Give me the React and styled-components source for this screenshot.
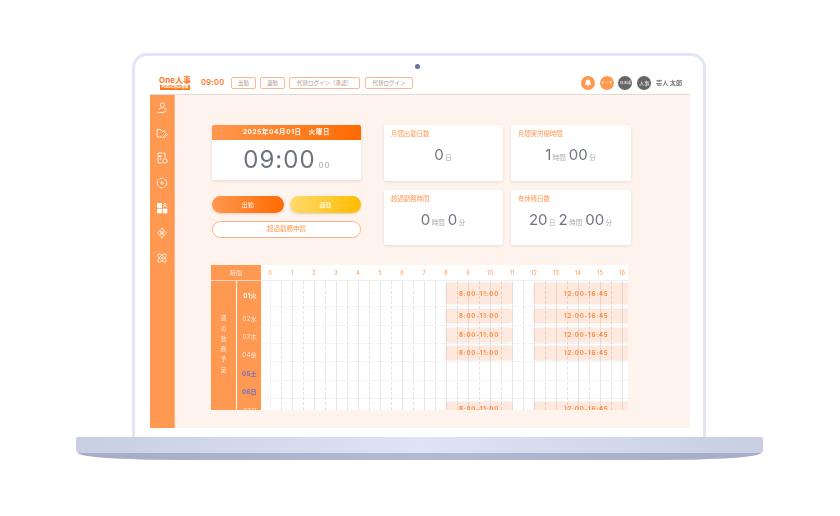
import styled, { createGlobalStyle } from 'styled-components';

const GlobalStyle = createGlobalStyle`
html, body {
  margin: 0;
  padding: 0;
  background: #fff;
  font-family: Inter, "Noto Sans CJK JP", sans-serif;
}
* { box-sizing: border-box; }
`;

const Page = styled.div`
  width: 840px;
  height: 516px;
  padding: 53px 0 0 76px;
  overflow: hidden;
`;
const Laptop = styled.div`
  width: 687px;
`;
const Lid = styled.div`
  position: relative;
  width: 574px;
  height: 384px;
  margin-left: 56px;
  padding: 16px 13px 9px 15px;
  background: #fff;
  border: 3px solid #e1e5f5;
  border-bottom: 0;
  border-radius: 15px 15px 0 0;
`;
const Camera = styled.span`
  position: absolute;
  top: 8px;
  left: 280px;
  width: 5px;
  height: 5px;
  border-radius: 50%;
  background: #68739f;
`;
const Base = styled.div`
  height: 16px;
  background: linear-gradient(90deg, #c8cfe3, #dfe3f3 50%, #c8cfe3);
  border-radius: 2px 2px 3px 3px;
`;
const BaseLip = styled.div`
  width: 683px;
  height: 7px;
  margin-left: 2px;
  background: linear-gradient(90deg, #a6acc6, #b4bad2 50%, #a6acc6);
  border-radius: 0 0 100px 100px / 0 0 7px 7px;
`;
const Screen = styled.div`
  width: 540px;
  height: 356px;
  display: flex;
  flex-direction: column;
  overflow: hidden;
  filter: blur(0.3px);
`;

const Header = styled.header`
  height: 23px;
  flex: none;
  display: flex;
  align-items: center;
  padding: 0 6px 1px 10px;
  background: #fff;
  border-bottom: 1px solid #e2dbd5;
`;
const Logo = styled.div`
  width: 30px;
  margin-right: 11px;
  display: flex;
  flex-direction: column;
  align-items: center;
`;
const LogoName = styled.span`
  color: #ff7a1f;
  font-size: 8px;
  line-height: 9px;
  font-weight: 700;
  white-space: nowrap;
`;
const LogoTag = styled.span`
  width: 30px;
  height: 5px;
  background: #ff7a1f;
  color: #fff;
  font-size: 3.5px;
  line-height: 5px;
  font-weight: 700;
  text-align: center;
  white-space: nowrap;
`;
const HeaderTime = styled.span`
  width: 30px;
  color: #ff7a1f;
  font-size: 7.5px;
  font-weight: 600;
  letter-spacing: 0.3px;
`;
const HeaderButton = styled.span`
  width: ${({ $w }) => $w}px;
  height: 12px;
  margin-right: ${({ $gap }) => $gap}px;
  border: 1px solid #ffb78f;
  border-radius: 2px;
  color: #a89488;
  font-size: 5.5px;
  line-height: 10px;
  text-align: center;
  white-space: nowrap;
`;
const HeaderRight = styled.div`
  margin-left: auto;
  display: flex;
  align-items: center;
  gap: 4.8px;
`;
const Round = styled.span`
  width: 14px;
  height: 14px;
  border-radius: 50%;
  display: flex;
  align-items: center;
  justify-content: center;
  background: ${({ $dark }) => ($dark ? '#666' : '#ff9850')};
  color: #fff;
  font-size: ${({ $small }) => ($small ? 3.8 : 5)}px;
  white-space: nowrap;
`;
const UserName = styled.span`
  width: 28px;
  color: #777;
  font-size: 6.2px;
  font-weight: 700;
  white-space: nowrap;
`;

const Body = styled.div`
  flex: 1;
  display: flex;
  min-height: 0;
`;
const Sidebar = styled.nav`
  width: 25px;
  flex: none;
  display: flex;
  flex-direction: column;
  align-items: center;
  gap: 13px;
  padding-top: 6.5px;
  background: #ff9850;
  border-right: 1px solid #ffb080;
`;
const NavIcon = styled.svg`
  width: 12px;
  height: 12px;
  fill: none;
  stroke: #fff;
  stroke-width: 0.8;
  display: block;
`;
const Main = styled.main`
  flex: 1;
  padding: 30px 0 0 36px;
  background: #fff3ed;
  overflow: hidden;
`;
const Top = styled.section`
  display: flex;
  gap: 23px;
  margin-left: 1px;
`;
const LeftCol = styled.div`
  width: 149px;
`;
const ClockCard = styled.div`
  height: 55px;
  background: #fff;
  border-radius: 2px;
  box-shadow: 0 1px 3px rgba(120, 90, 70, 0.18);
  overflow: hidden;
`;
const ClockHead = styled.div`
  height: 15px;
  background: linear-gradient(90deg, #ff9850, #ff6a00);
  color: #fff;
  font-size: 6.5px;
  line-height: 15px;
  font-weight: 700;
  text-align: center;
  letter-spacing: 0.6px;
  white-space: pre;
`;
const ClockBody = styled.div`
  height: 40px;
  display: flex;
  align-items: baseline;
  justify-content: center;
  gap: 3px;
  padding-left: 1px;
`;
const ClockTime = styled.span`
  color: #6f7480;
  font-size: 24px;
  line-height: 40px;
  letter-spacing: 1px;
`;
const ClockSec = styled.span`
  color: #aaa;
  font-size: 8px;
  letter-spacing: 1px;
`;
const PillRow = styled.div`
  display: flex;
  gap: 6px;
  margin-top: 16px;
`;
const Pill = styled.span`
  flex: 1;
  height: 17px;
  border-radius: 9px;
  background: ${({ $yellow }) =>
    $yellow
      ? 'linear-gradient(90deg, #ffdb6e, #ffbb00)'
      : 'linear-gradient(90deg, #ff9850, #ff6a00)'};
  box-shadow: 0 1px 2px rgba(120, 90, 70, 0.25);
  color: #fff;
  font-size: 6px;
  line-height: 17px;
  text-align: center;
`;
const OutlinePill = styled.div`
  height: 17px;
  margin-top: 8px;
  border: 1px solid #ffb28a;
  border-radius: 9px;
  background: #fff;
  color: #ff9850;
  font-size: 6.5px;
  line-height: 15px;
  text-align: center;
`;
const Cards = styled.div`
  display: grid;
  grid-template-columns: 119px 120px;
  grid-template-rows: 56px 55px;
  gap: 9px 8px;
`;
const Card = styled.div`
  padding: 5px 7px;
  background: #fff;
  border-radius: 2px;
  box-shadow: 0 1px 3px rgba(120, 90, 70, 0.18);
`;
const CardTitle = styled.div`
  color: #ff9850;
  font-size: 6.4px;
  line-height: 9px;
`;
const CardValue = styled.div`
  display: flex;
  align-items: baseline;
  justify-content: center;
  gap: 2px;
  margin-top: 4px;
`;
const Num = styled.span`
  color: #6f7480;
  font-size: 15px;
  line-height: 24px;
  margin-right: 1.5px;
`;
const Unit = styled.span`
  color: #aaa;
  font-size: 6.5px;
  margin-right: 1px;
`;

const Schedule = styled.section`
  width: 417px;
  margin-top: 20px;
`;
const ScheduleHead = styled.div`
  height: 16px;
  display: flex;
`;
const HeadLabel = styled.div`
  width: 50px;
  flex: none;
  background: #ff9850;
  color: #ffe6d6;
  font-size: 6.2px;
  line-height: 16px;
  text-align: center;
  border-bottom: 1px solid #e7d6cb;
`;
const HourRow = styled.div`
  flex: 1;
  display: flex;
  background: #fff;
  border-bottom: 1px solid #eee;
  overflow: hidden;
`;
const Hour = styled.span`
  width: 22px;
  flex: none;
  margin-left: ${({ $first }) => ($first ? -2 : 0)}px;
  color: #ff9850;
  font-size: 5.5px;
  line-height: 16px;
  text-align: center;
`;
const ScheduleBody = styled.div`
  height: 129px;
  display: flex;
  overflow: hidden;
`;
const WeekLabel = styled.div`
  width: 25px;
  flex: none;
  display: flex;
  align-items: center;
  justify-content: center;
  background: #ff9850;
  color: #ffe6d6;
  font-size: 6px;
  writing-mode: vertical-rl;
  text-orientation: upright;
  letter-spacing: 4.3px;
`;
const Dates = styled.div`
  width: 25px;
  flex: none;
  background: #ff9850;
  border-left: 1px solid #fff;
`;
const DateCell = styled.div`
  height: ${({ $h }) => $h}px;
  padding: 3px 4px 0 0;
  display: flex;
  align-items: center;
  justify-content: flex-end;
  color: ${({ $holiday, $today }) => ($holiday ? '#6a72cc' : $today ? '#fff' : '#ffe6d6')};
  font-size: 6.2px;
  font-weight: ${({ $today, $holiday }) => ($today || $holiday ? 700 : 400)};
  letter-spacing: 0.2px;
  white-space: nowrap;
`;
const Timeline = styled.div`
  position: relative;
  flex: 1;
  background: #fff;
  overflow: hidden;
`;
const Lines = styled.div`
  position: absolute;
  top: 0;
  bottom: 0;
  left: 9px;
  display: flex;
  pointer-events: none;
`;
const HourLine = styled.span`
  position: relative;
  width: 22px;
  flex: none;
  border-left: 1px solid ${({ $first }) => ($first ? '#f3f3f3' : 'rgba(0, 0, 0, 0.09)')};
  &::after {
    content: '';
    position: absolute;
    top: 0;
    bottom: 0;
    left: 10px;
    border-left: 1px dashed rgba(0, 0, 0, 0.11);
  }
`;
const Row = styled.div`
  height: ${({ $h }) => $h}px;
  display: grid;
  grid-template-columns: repeat(72, 5.5px);
  align-items: center;
  padding-left: 9px;
  border-bottom: 1px solid #f5f5f5;
`;
const Shift = styled.div`
  grid-row: 1;
  grid-column: ${({ $start }) => $start} / span ${({ $span }) => $span};
  height: ${({ $tall }) => ($tall ? 21 : 14)}px;
  border-radius: 3px;
  background: #ffe9de;
  box-shadow: 0 0 2px rgba(120, 90, 70, 0.25);
  color: #ff8a3c;
  font-size: 6px;
  font-weight: 700;
  line-height: ${({ $tall }) => ($tall ? 21 : 14)}px;
  letter-spacing: 0.8px;
  text-align: center;
  white-space: nowrap;
`;

const icons = [
  <>
    <circle cx="6.5" cy="3" r="2.1" />
    <path d="M2.5 8c1-1.800 2.500-2.300 4-2.300s3 .5 4 2.300M1.500 10.500h5.500l3.500-1.200" />
  </>,
  <>
    <path d="M1 2.500h3.500l1 1.500H9v2M1 2.500v7.500h5.500" />
    <path d="M7.500 9.500l3-3 1 1-3 3h-1z" />
  </>,
  <>
    <path d="M2 1h7v5M2 1v10h4.500" />
    <path d="M3.500 3.500h1.500v1.500h-1.500zM3.500 7h2" />
    <circle cx="9" cy="9" r="2.200" />
  </>,
  <>
    <circle cx="6" cy="6" r="4.800" strokeDasharray="5 1" />
    <circle cx="6" cy="6" r="1.200" />
  </>,
  <>
    <path d="M1.500 1.500h4v4h-4zM1.500 7h4v4h-4zM7 7h4v4H7z" fill="#fff" />
    <circle cx="9" cy="2.600" r="1.200" />
    <path d="M7 5.500c.3-1.200 1-1.600 2-1.600s1.700.4 2 1.600" />
  </>,
  <>
    <path d="M6 1.500L10.500 6 6 10.500 1.500 6z" strokeWidth="0.7" />
    <circle cx="6" cy="6" r="1.300" />
    <path d="M6 .5v2M6 9.500v2M3.500 3.500l5 5M8.500 3.500l-5 5" strokeWidth="0.5" />
  </>,
  <>
    <ellipse cx="6" cy="6" rx="5.400" ry="2.300" transform="rotate(45 6 6)" strokeWidth="0.7" />
    <ellipse cx="6" cy="6" rx="5.400" ry="2.300" transform="rotate(-45 6 6)" strokeWidth="0.7" />
    <circle cx="6" cy="6" r="1" strokeWidth="0.6" />
  </>,
];

const cards = [
  { title: '月間出勤日数', value: [['0', '日']] },
  { title: '月間実労働時間', value: [['1', '時間'], ['00', '分']] },
  { title: '超過勤務時間', value: [['0', '時間'], ['0', '分']] },
  { title: '有休残日数', value: [['20', '日'], ['2', '時間'], ['00', '分']] },
];

const days = [
  { label: '01火', h: 26, today: true, work: true },
  { label: '02水', h: 19, work: true },
  { label: '03木', h: 18, work: true },
  { label: '04金', h: 18, work: true },
  { label: '05土', h: 19, holiday: true },
  { label: '06日', h: 18, holiday: true },
  { label: '07月', h: 20, work: true },
];

const App = () => (
  <>
    <GlobalStyle />
    <Page>
      <Laptop>
        <Lid>
          <Camera />
          <Screen>
            <Header>
              <Logo>
                <LogoName>One人事</LogoName>
                <LogoTag>PUBLIC勤怠管理</LogoTag>
              </Logo>
              <HeaderTime>09:00</HeaderTime>
              <HeaderButton $w={25} $gap={4}>出勤</HeaderButton>
              <HeaderButton $w={25} $gap={4}>退勤</HeaderButton>
              <HeaderButton $w={71} $gap={5}>代替ログイン（承認）</HeaderButton>
              <HeaderButton $w={48} $gap={0}>代替ログイン</HeaderButton>
              <HeaderRight>
                <Round>
                  <svg width="8" height="8" viewBox="0 0 8 8" fill="#fff">
                    <path d="M4 .6c-1.500 0-2.300 1.100-2.300 2.500 0 1.500-.6 2.300-.9 2.700h6.400c-.3-.4-.9-1.200-.9-2.700C6.300 1.700 5.500.6 4 .6zM3.100 6.500h1.800C4.800 7.100 4.500 7.400 4 7.400s-.8-.3-.9-.9z" />
                  </svg>
                </Round>
                <Round $small>テーマ</Round>
                <Round $dark $small>日本語</Round>
                <Round $dark>人事</Round>
                <UserName>壱人 太郎</UserName>
              </HeaderRight>
            </Header>
            <Body>
              <Sidebar>
                {icons.map((icon, i) => (
                  <NavIcon viewBox="0 0 12 12" key={i}>{icon}</NavIcon>
                ))}
              </Sidebar>
              <Main>
                <Top>
                  <LeftCol>
                    <ClockCard>
                      <ClockHead>2025年04月01日　火曜日</ClockHead>
                      <ClockBody>
                        <ClockTime>09:00</ClockTime>
                        <ClockSec>00</ClockSec>
                      </ClockBody>
                    </ClockCard>
                    <PillRow>
                      <Pill>出勤</Pill>
                      <Pill $yellow>退勤</Pill>
                    </PillRow>
                    <OutlinePill>超過勤務申請</OutlinePill>
                  </LeftCol>
                  <Cards>
                    {cards.map((card) => (
                      <Card key={card.title}>
                        <CardTitle>{card.title}</CardTitle>
                        <CardValue>
                          {card.value.map(([num, unit]) => (
                            <span key={unit}>
                              <Num>{num}</Num><Unit>{unit}</Unit>
                            </span>
                          ))}
                        </CardValue>
                      </Card>
                    ))}
                  </Cards>
                </Top>
                <Schedule>
                  <ScheduleHead>
                    <HeadLabel>時間</HeadLabel>
                    <HourRow>
                      {Array.from({ length: 17 }, (_, h) => (
                        <Hour key={h} $first={h === 0}>{h}</Hour>
                      ))}
                    </HourRow>
                  </ScheduleHead>
                  <ScheduleBody>
                    <WeekLabel>週の勤務予定</WeekLabel>
                    <Dates>
                      {days.map((d) => (
                        <DateCell key={d.label} $h={d.h} $today={d.today} $holiday={d.holiday}>
                          {d.label}
                        </DateCell>
                      ))}
                    </Dates>
                    <Timeline>
                      {days.map((d) => (
                        <Row key={d.label} $h={d.h}>
                          {d.work && (
                            <>
                              <Shift $start={33} $span={12} $tall={d.today}>8:00-11:00</Shift>
                              <Shift $start={49} $span={19} $tall={d.today}>12:00-16:45</Shift>
                            </>
                          )}
                        </Row>
                      ))}
                      <Lines>
                        {Array.from({ length: 17 }, (_, h) => (
                          <HourLine key={h} $first={h === 0} />
                        ))}
                      </Lines>
                    </Timeline>
                  </ScheduleBody>
                </Schedule>
              </Main>
            </Body>
          </Screen>
        </Lid>
        <Base />
        <BaseLip />
      </Laptop>
    </Page>
  </>
);

export default App;
